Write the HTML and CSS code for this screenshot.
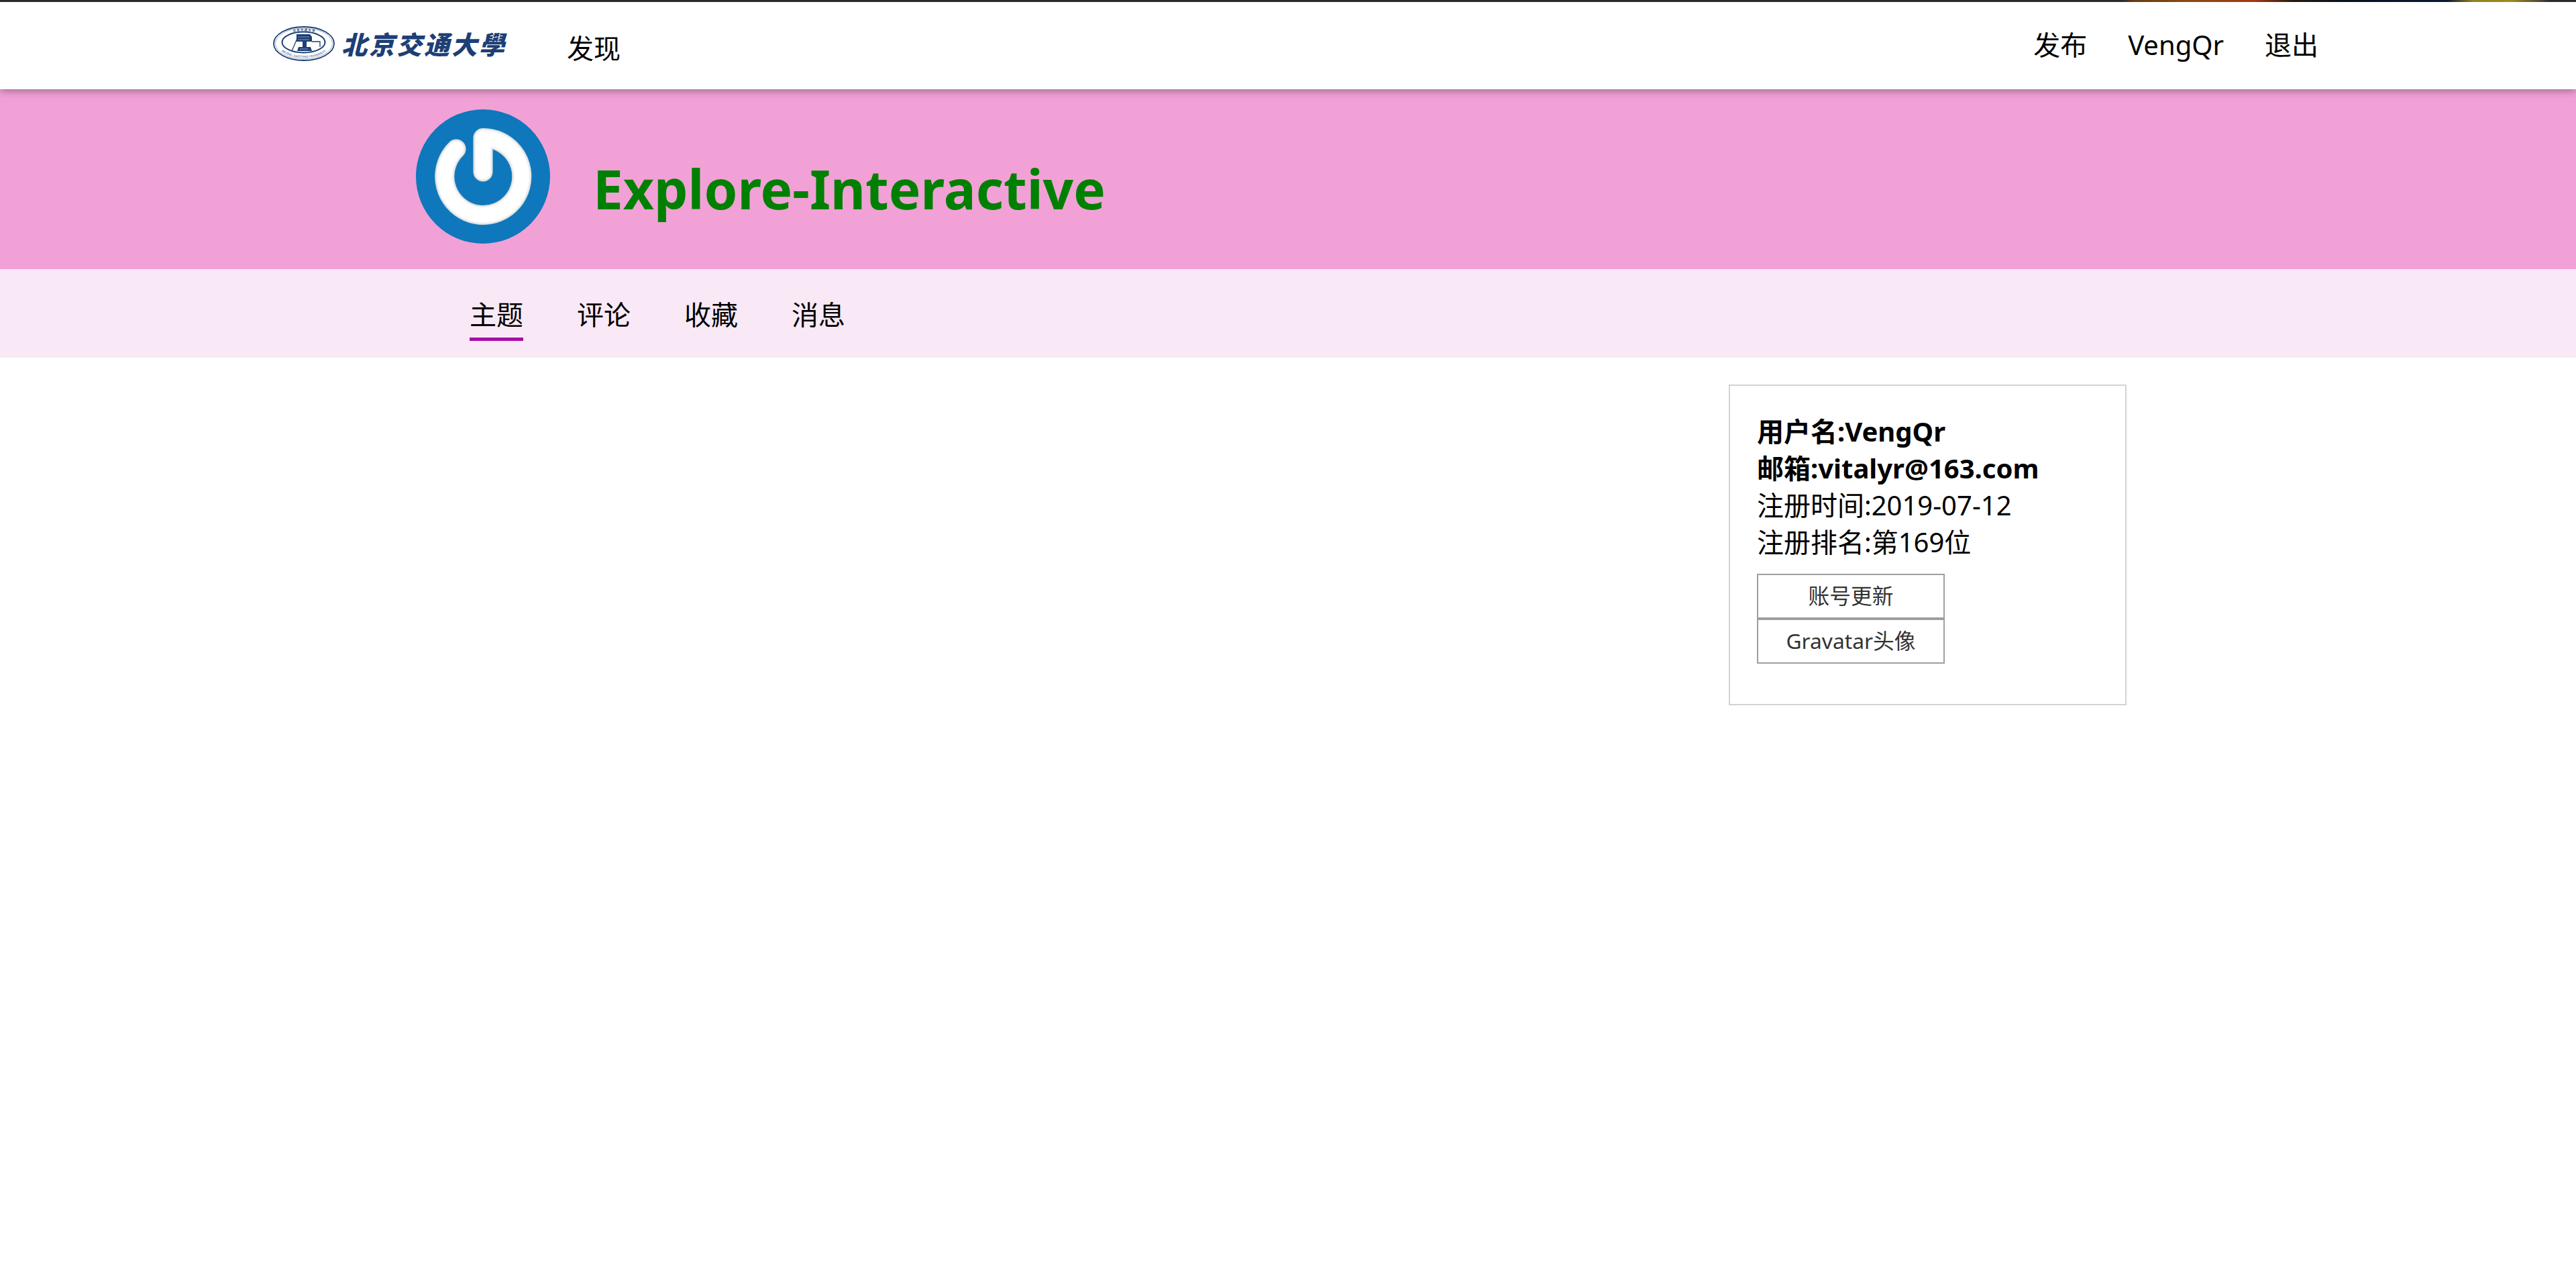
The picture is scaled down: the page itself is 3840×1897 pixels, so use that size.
FILE: index.html
```
<!DOCTYPE html>
<html lang="zh-CN">
<head>
<meta charset="utf-8">
<title>Explore-Interactive</title>
<link rel="stylesheet" href="styles.css">
</head>
<body>
<nav class="topbar">
  <div class="topbar-strip"></div>
  <div class="topbar-inner">
    <a class="brand" href="#">
      <svg class="seal" viewBox="0 0 92 52" width="92" height="52" aria-hidden="true">
        <ellipse cx="46" cy="26" rx="45" ry="25" fill="#fff" stroke="#1d3f76" stroke-width="1.8"/>
        <ellipse cx="46" cy="26" rx="42.5" ry="22.8" fill="none" stroke="#5a7399" stroke-width=".5"/>
        <ellipse cx="45.5" cy="24" rx="32" ry="15.5" fill="none" stroke="#1d3f76" stroke-width="2"/>
        <path d="M35 12h20l3 4v7h-8v8h6l2 6H36l2-6h6v-8h-9z" fill="#1d3f76"/>
        <path d="M37 16h17M37 20h17M40 34h12" stroke="#8fa3c0" stroke-width=".9"/>
        <path d="M28 37l9-21M58 23h12v8" fill="none" stroke="#1d3f76" stroke-width="1.3"/>
        <defs>
          <path id="sealArc" d="M6 26C10 54 82 54 86 26"/>
          <path id="sealArcTop" d="M13 18C24 3.500 68 3.500 79 18"/>
        </defs>
        <text class="seal-text"><textPath href="#sealArc" startOffset="50%" text-anchor="middle">BEIJING JIAOTONG UNIVERSITY</textPath></text>
        <text class="seal-text seal-text-top"><textPath href="#sealArcTop" startOffset="50%" text-anchor="middle">北 京 交 通 大 学</textPath></text>
      </svg>
      <span class="brand-name">北京交通大學</span>
    </a>
    <a class="link link-discover" href="#">发现</a>
    <div class="topbar-right">
      <a class="link" href="#">发布</a>
      <a class="link" href="#">VengQr</a>
      <a class="link" href="#">退出</a>
    </div>
  </div>
</nav>

<header class="profile-head">
  <svg class="avatar" viewBox="0 0 200 200" width="200" height="200" aria-hidden="true">
    <defs>
      <filter id="soft" x="-20%" y="-20%" width="140%" height="140%"><feGaussianBlur stdDeviation="1.8"/></filter>
    </defs>
    <circle cx="100" cy="100" r="100" fill="#0f77bb"/>
    <path d="M100 93V42.5A57.5 57.5 0 1 1 60 59" fill="none" stroke="#d3d9da" stroke-width="29" stroke-linecap="round" stroke-linejoin="round"/>
    <path d="M100 93V42.5A57.5 57.5 0 1 1 60 59" fill="none" stroke="#fff" stroke-width="25" stroke-linecap="round" stroke-linejoin="round" filter="url(#soft)"/>
  </svg>
  <h1 class="profile-title">Explore-Interactive</h1>
</header>

<div class="subnav">
  <a class="tab tab-active" href="#">主题</a>
  <a class="tab" href="#">评论</a>
  <a class="tab" href="#">收藏</a>
  <a class="tab" href="#">消息</a>
</div>

<main class="content">
  <aside class="card">
    <div class="strong">用户名:VengQr</div>
    <div class="strong">邮箱:vitalyr@163.com</div>
    <div>注册时间:2019-07-12</div>
    <div>注册排名:第169位</div>
    <div class="actions">
      <a class="btn" href="#">账号更新</a>
      <a class="btn" href="#">Gravatar头像</a>
    </div>
  </aside>
</main>
</body>
</html>
```
FILE: styles.css
```
html, body {
  margin: 0;
  padding: 0;
  background: #fff;
  color: #000;
  font-family: "Noto Sans", "Noto Sans CJK SC", sans-serif;
  font-size: 40px;
  line-height: 55px;
}
a {
  color: inherit;
  text-decoration: none;
}
.topbar {
  position: relative;
  z-index: 2;
  height: 133px;
  background: #fff;
  box-shadow: 0 2px 12px rgba(60, 40, 60, .5);
}
.topbar-strip {
  height: 3px;
  background: linear-gradient(90deg, #2b2b2b 0, #2b2b2b 82.4%, #6b3a12 82.8%, #8a4a14 85%, #a23a14 87.5%, #2a1a10 89%, #06121f 91%, #0a1a30 95%, #8d8420 96%, #a08a1c 97.5%, #4a4a3a 98.6%, #2b2b2b 99%);
}
.topbar-inner {
  display: flex;
  align-items: center;
  height: 130px;
  padding: 0 384px 0 407px;
}
.brand {
  display: flex;
  align-items: center;
  gap: 10px;
  padding-bottom: 6px;
}
.seal {
  display: block;
  overflow: visible;
}
.seal-text {
  font-family: "Liberation Sans", sans-serif;
  font-size: 4.5px;
  fill: #1d3f76;
}
.seal-text-top {
  font-family: "Noto Sans CJK SC", sans-serif;
  font-weight: 700;
}
.brand-name {
  font-family: "Noto Sans CJK TC", sans-serif;
  font-size: 38px;
  line-height: 48px;
  font-weight: 900;
  letter-spacing: 3px;
  font-style: italic;
  color: #1d3f76;
  white-space: nowrap;
}
.link-discover {
  margin-left: 90px;
  padding-top: 6px;
}
.topbar-right {
  display: flex;
  gap: 61px;
  margin-left: auto;
  padding-bottom: 4px;
}
.profile-head {
  display: flex;
  align-items: flex-start;
  gap: 64px;
  box-sizing: border-box;
  height: 268px;
  padding: 30px 0 0 620px;
  background: #f1a1d6;
}
.avatar {
  display: block;
  flex: none;
}
.profile-title {
  margin: 63px 0 0;
  font-size: 80px;
  line-height: 110px;
  font-weight: 700;
  color: #008000;
}
.subnav {
  display: flex;
  gap: 80px;
  box-sizing: border-box;
  height: 132px;
  padding: 40px 0 0 700px;
  background: #f9e8f5;
}
.tab {
  height: 62px;
}
.tab-active {
  border-bottom: 5px solid #a80ca8;
}
.content {
  padding: 40px 0 0 2577px;
}
.card {
  box-sizing: border-box;
  width: 593px;
  padding: 40px 40px 60px 40px;
  border: 2px solid #d3d3d3;
}
.strong {
  font-weight: 700;
}
.actions {
  margin-top: 20px;
  width: 280px;
}
.btn {
  display: block;
  box-sizing: border-box;
  height: 67px;
  border: 2px solid #a09da0;
  font-size: 31.75px;
  line-height: 62px;
  text-align: center;
  color: #333;
}
```
